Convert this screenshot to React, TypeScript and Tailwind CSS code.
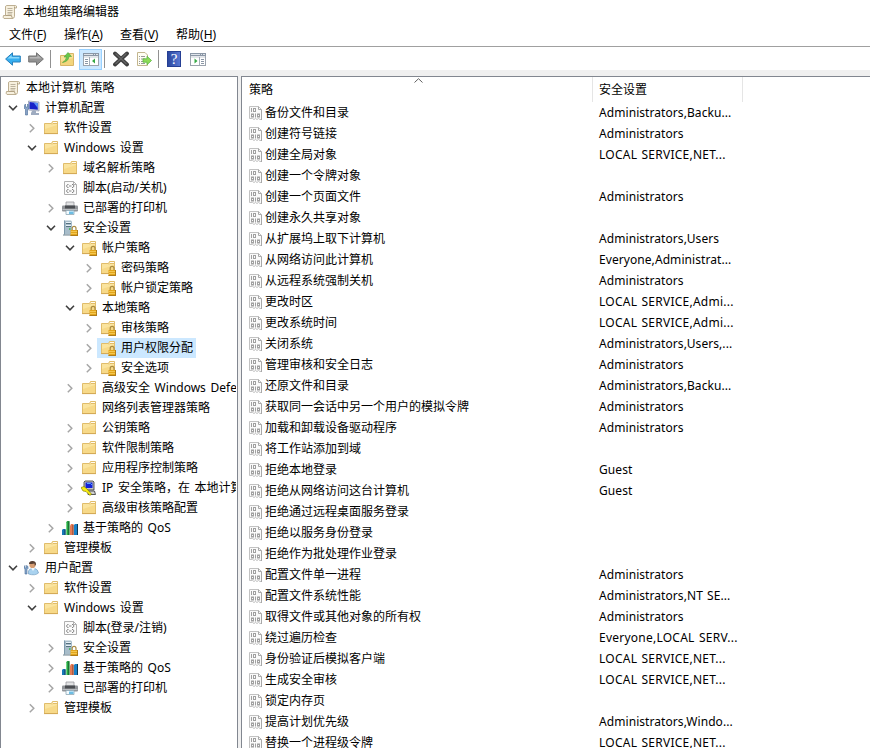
import type { ReactNode } from 'react';
import clsx from 'clsx';

type IconName =
  | 'scroll'
  | 'computer'
  | 'folder'
  | 'lockedFolder'
  | 'script'
  | 'printer'
  | 'security'
  | 'ipsec'
  | 'chart'
  | 'user';

interface TreeNode {
  label: string;
  level: number;
  icon: IconName;
  state?: 'open' | 'closed';
  selected?: boolean;
}

const tree: TreeNode[] = [
  { label: '本地计算机 策略', level: 0, icon: 'scroll' },
  { label: '计算机配置', level: 1, icon: 'computer', state: 'open' },
  { label: '软件设置', level: 2, icon: 'folder', state: 'closed' },
  { label: 'Windows 设置', level: 2, icon: 'folder', state: 'open' },
  { label: '域名解析策略', level: 3, icon: 'folder', state: 'closed' },
  { label: '脚本(启动/关机)', level: 3, icon: 'script' },
  { label: '已部署的打印机', level: 3, icon: 'printer', state: 'closed' },
  { label: '安全设置', level: 3, icon: 'security', state: 'open' },
  { label: '帐户策略', level: 4, icon: 'lockedFolder', state: 'open' },
  { label: '密码策略', level: 5, icon: 'lockedFolder', state: 'closed' },
  { label: '帐户锁定策略', level: 5, icon: 'lockedFolder', state: 'closed' },
  { label: '本地策略', level: 4, icon: 'lockedFolder', state: 'open' },
  { label: '审核策略', level: 5, icon: 'lockedFolder', state: 'closed' },
  { label: '用户权限分配', level: 5, icon: 'lockedFolder', state: 'closed', selected: true },
  { label: '安全选项', level: 5, icon: 'lockedFolder', state: 'closed' },
  { label: '高级安全 Windows Defe', level: 4, icon: 'folder', state: 'closed' },
  { label: '网络列表管理器策略', level: 4, icon: 'folder' },
  { label: '公钥策略', level: 4, icon: 'folder', state: 'closed' },
  { label: '软件限制策略', level: 4, icon: 'folder', state: 'closed' },
  { label: '应用程序控制策略', level: 4, icon: 'folder', state: 'closed' },
  { label: 'IP 安全策略，在 本地计算', level: 4, icon: 'ipsec', state: 'closed' },
  { label: '高级审核策略配置', level: 4, icon: 'folder', state: 'closed' },
  { label: '基于策略的 QoS', level: 3, icon: 'chart', state: 'closed' },
  { label: '管理模板', level: 2, icon: 'folder', state: 'closed' },
  { label: '用户配置', level: 1, icon: 'user', state: 'open' },
  { label: '软件设置', level: 2, icon: 'folder', state: 'closed' },
  { label: 'Windows 设置', level: 2, icon: 'folder', state: 'open' },
  { label: '脚本(登录/注销)', level: 3, icon: 'script' },
  { label: '安全设置', level: 3, icon: 'security', state: 'closed' },
  { label: '基于策略的 QoS', level: 3, icon: 'chart', state: 'closed' },
  { label: '已部署的打印机', level: 3, icon: 'printer', state: 'closed' },
  { label: '管理模板', level: 2, icon: 'folder', state: 'closed' },
];

const policies: [string, string][] = [
  ['备份文件和目录', 'Administrators,Backu...'],
  ['创建符号链接', 'Administrators'],
  ['创建全局对象', 'LOCAL SERVICE,NET...'],
  ['创建一个令牌对象', ''],
  ['创建一个页面文件', 'Administrators'],
  ['创建永久共享对象', ''],
  ['从扩展坞上取下计算机', 'Administrators,Users'],
  ['从网络访问此计算机', 'Everyone,Administrat...'],
  ['从远程系统强制关机', 'Administrators'],
  ['更改时区', 'LOCAL SERVICE,Admi...'],
  ['更改系统时间', 'LOCAL SERVICE,Admi...'],
  ['关闭系统', 'Administrators,Users,...'],
  ['管理审核和安全日志', 'Administrators'],
  ['还原文件和目录', 'Administrators,Backu...'],
  ['获取同一会话中另一个用户的模拟令牌', 'Administrators'],
  ['加载和卸载设备驱动程序', 'Administrators'],
  ['将工作站添加到域', ''],
  ['拒绝本地登录', 'Guest'],
  ['拒绝从网络访问这台计算机', 'Guest'],
  ['拒绝通过远程桌面服务登录', ''],
  ['拒绝以服务身份登录', ''],
  ['拒绝作为批处理作业登录', ''],
  ['配置文件单一进程', 'Administrators'],
  ['配置文件系统性能', 'Administrators,NT SE...'],
  ['取得文件或其他对象的所有权', 'Administrators'],
  ['绕过遍历检查', 'Everyone,LOCAL SERV...'],
  ['身份验证后模拟客户端', 'LOCAL SERVICE,NET...'],
  ['生成安全审核', 'LOCAL SERVICE,NET...'],
  ['锁定内存页', ''],
  ['提高计划优先级', 'Administrators,Windo...'],
  ['替换一个进程级令牌', 'LOCAL SERVICE,NET...'],
];

const menus: [string, string][] = [
  ['文件', 'F'],
  ['操作', 'A'],
  ['查看', 'V'],
  ['帮助', 'H'],
];

// Left padding of a tree row for each level
const indents = ['pl-0', 'pl-[5px]', 'pl-[24px]', 'pl-[43px]', 'pl-[62px]', 'pl-[81px]'];

function Svg({ children, className }: { children: ReactNode; className?: string }) {
  return (
    <svg width="16" height="16" viewBox="0 0 16 16" className={clsx('shrink-0', className)}>
      {children}
    </svg>
  );
}

function Folder() {
  return (
    <>
      <path d="M1.5 3.5H8.5L9.5 1.5H14.5V13.5H1.5Z" fill="#fae49f" stroke="#e0bd6c" />
      <path d="M10 2.5H14" stroke="#fffaf0" />
      <path d="M9 4.5L10 3.5H14" fill="none" stroke="#dcb35c" strokeWidth=".8" />
      <path d="M2 9L14 5V13H2Z" fill="#f7d988" />
      <path d="M1 13.6H15" stroke="#d3a855" />
    </>
  );
}

function Lock() {
  return (
    <>
      <path d="M10.2 10V8.2a1.9 1.9 0 0 1 3.8 0V10" fill="none" stroke="#a98a42" strokeWidth="1.2" />
      <rect x="8.5" y="10" width="7.5" height="6" fill="#e3a51c" />
      <path d="M9 11.5h6M9 13.5h6" stroke="#f7cf5d" strokeWidth=".8" />
      <path d="M8.5 15.5h7.5M15.5 10v6" stroke="#b07d18" />
    </>
  );
}

function Scroll() {
  return (
    <Svg>
      <path d="M4.5 1.5H13.5Q15 1.5 14.5 4H12.5V12.5Q12 14.5 10.5 14.5H2Q.5 13.5 1.5 11.5H3.5V3Q3.5 1.8 4.5 1.5Z" fill="#f7f0de" stroke="#b5a687" strokeWidth=".9" />
      <path d="M12.5 4V2.5M3.5 11.5H9.5Q9.5 14 11 14.4" fill="none" stroke="#a89878" strokeWidth=".9" />
      <path d="M5.5 4.5H10.5M5.5 6.5H10.5M5.5 8.5H10.5M5.5 10H10" stroke="#b5ab96" strokeWidth=".9" />
    </Svg>
  );
}

function NodeIcon({ name }: { name: IconName }) {
  switch (name) {
    case 'scroll':
      return <Scroll />;
    case 'folder':
      return (
        <Svg>
          <Folder />
        </Svg>
      );
    case 'lockedFolder':
      return (
        <Svg>
          <Folder />
          <Lock />
        </Svg>
      );
    case 'script':
      return (
        <Svg>
          <path d="M2.5 1.5H11.5L14.5 4.5V14.5H2.5Z" fill="#fbfbfb" stroke="#b0b0b0" />
          <path d="M11.5 1.5V4.5H14.5" fill="none" stroke="#b0b0b0" />
          <path d="M6.5 4.5H5.5L4.5 6L5.5 7.5H6.5M10 4.5H11L12 6L11 7.5H10M6.5 9.5H5.5L4.5 11L5.5 12.5H6.5M10 9.5H11L12 11L11 12.5H10" fill="none" stroke="#777" strokeWidth=".9" />
          <path d="M7 6H9.5M7 11H9.5" stroke="#888" />
        </Svg>
      );
    case 'printer':
      return (
        <Svg>
          <path d="M4 2H12V7H4Z" fill="#e2e3e4" stroke="#999b9e" strokeWidth=".8" />
          <rect x="0" y="5.5" width="16" height="6" rx="1" fill="#929599" />
          <path d="M3 5.5H13V8.5H3Z" fill="#4b4e52" />
          <path d="M.5 9.5H15.5" stroke="#b9bcc0" />
          <path d="M4 10.5H12V14.5H4Z" fill="#f4fbff" stroke="#8da7b5" strokeWidth=".8" />
          <path d="M7 11.5H11.5V14H7Z" fill="#6dbde3" />
        </Svg>
      );
    case 'security':
      return (
        <Svg>
          <path d="M2 .5H9L10 1.5V14.5H2Z" fill="#a8bdca" />
          <path d="M2.5 .5V14.5" stroke="#7d98aa" />
          <path d="M4 2.5H9M4 5.5H9" stroke="#e6f0f5" />
          <path d="M4 3.5H9M4 6.5H9" stroke="#55707f" />
          <path d="M7 9h1.5" stroke="#36b94a" strokeWidth="1.5" />
          <path d="M1 15H10" stroke="#6f838f" />
          <Lock />
        </Svg>
      );
    case 'ipsec':
      return (
        <Svg>
          <path d="M4 1H12L13 2V10H4L3 9V2Z" fill="#c3c3c3" stroke="#333" strokeWidth=".8" />
          <rect x="4.5" y="2.5" width="7" height="5.5" fill="#1322d8" />
          <path d="M6 3.5H9.5L11 5" fill="none" stroke="#59a5ff" />
          <path d="M7 11H13.5L14.5 14.5H7Z" fill="#d0d0d0" stroke="#333" strokeWidth=".8" />
          <path d="M0 7.5L3 6.5L6 9L10.5 14L9 15.5L5 11.5L2 11Z" fill="#f8ed0f" stroke="#777000" strokeWidth=".6" />
        </Svg>
      );
    case 'chart':
      return (
        <Svg>
          <path d="M0 10L1 9H3.5V15H0Z" fill="#1678b8" />
          <path d="M4 3L5 1H7.5V15H4Z" fill="#27a746" />
          <path d="M4.5 3V15" stroke="#71d783" />
          <path d="M6.8 1.5V15" stroke="#195d2c" />
          <path d="M8 6L9 4H11.5V15H8Z" fill="#e47b55" />
          <path d="M11 5V15" stroke="#843c2b" />
          <path d="M12 5L13 4H16V15H12Z" fill="#1781c8" />
          <path d="M15.5 4V15M3 9.5V15" stroke="#0b3958" />
        </Svg>
      );
    case 'computer':
      return (
        <Svg>
          <path d="M4.5 1L15 2V11L4.5 10Z" fill="#d6dbe5" stroke="#8993ab" strokeWidth=".7" />
          <path d="M5.5 2L13.8 3V9.8L5.5 9Z" fill="#1721c8" />
          <path d="M9.5 2.5L13.8 3V8Z" fill="#5791f5" />
          <path d="M8 11H12V13H15V15H7V13Z" fill="#9eabc0" />
          <path d="M0 5.5L1.5 4V7H3.5V4L5 5.5V8L3.5 9.5V15H1.5V9.5L0 8Z" fill="#89a3c5" stroke="#486b99" strokeWidth=".6" />
        </Svg>
      );
    case 'user':
      return (
        <Svg>
          <path d="M4.5 14V11Q5 9 8 8.5H11Q14 9.5 14.5 13Q11 16 4.5 14Z" fill="#a9d2ef" stroke="#6392b8" strokeWidth=".6" />
          <path d="M7 8L9 11L11 8Z" fill="#f3f9fd" />
          <circle cx="8.5" cy="5" r="3.1" fill="#d79d72" />
          <path d="M5 4Q4.8 1.3 8.2 1Q12.2 .8 12 4.5L10.8 6L10.5 3.5Q8 4 5 4Z" fill="#594033" />
          <path d="M0 6.5L1 5.5V8H2.5V5.5L4 6.5V8.5L3 9.5V14H1V9.5L0 8.5Z" fill="#8aa9cc" stroke="#476b98" strokeWidth=".6" />
        </Svg>
      );
  }
}

function Chevron({ state }: { state?: 'open' | 'closed' }) {
  return (
    <svg width="14" height="14" viewBox="0 0 14 14" className="shrink-0" fill="none">
      {state === 'open' && <path d="M3 4.8L7 8.8L11 4.8" stroke="#404040" strokeWidth="1.6" />}
      {state === 'closed' && <path d="M4.8 3.2L8.8 7.2L4.8 11.2" stroke="#a6a6a6" strokeWidth="1.5" />}
    </svg>
  );
}

function PolicyIcon() {
  return (
    <svg width="14" height="16" viewBox="0 0 14 16" className="shrink-0" fill="none">
      <path d="M.5 1.5H9.5L12.5 4.5V14.5H11L9.5 13.5L8 14.5L6.5 13.5L5 14.5L3.5 13.5L.5 13.5Z" fill="#fafafa" stroke="#c2c2c2" />
      <path d="M9.5 1.5V4.5H12.5M12.5 5V15" stroke="#a8a8a8" />
      <path d="M2.5 3V7" stroke="#a0a0a0" />
      <rect x="4.5" y="3.5" width="2" height="3" stroke="#a0a0a0" />
      <rect x="2.5" y="9" width="2" height="3" stroke="#a0a0a0" />
      <path d="M6.5 8.5V12.5" stroke="#a0a0a0" />
      <rect x="8.5" y="9" width="2" height="3" stroke="#a0a0a0" />
    </svg>
  );
}

function Arrow({ back }: { back?: boolean }) {
  return (
    <Svg className={back ? '' : '-scale-x-100'}>
      <path
        d="M.6 8L7.5 1.8V5H15.3V11H7.5V14.2Z"
        fill={back ? '#36aef0' : '#929292'}
        stroke={back ? '#2a80bb' : '#757575'}
        strokeLinejoin="round"
      />
      <path d="M2.5 7.6L6.6 3.9V6H14.3V7.6Z" fill={back ? '#8bd8fa' : '#b7b7b7'} />
    </Svg>
  );
}

function WindowPane({ flip }: { flip?: boolean }) {
  return (
    <Svg>
      <rect x=".5" y="2.5" width="15" height="12" fill="#fff" stroke="#9ba3ad" />
      <path d="M0 2H16V5H0Z" fill="#8b97a6" />
      <path d="M1 3.5H10M11 3.5H12M13 3.5H15" stroke="#dfe4ea" />
      <path d="M1 6H15" stroke="#c7cdd5" />
      <path d={flip ? 'M9.5 6V14' : 'M6.5 6V14'} stroke="#a5adb7" />
      <path d={flip ? 'M11 8.5H14M11 10.5H14M11 12.5H14' : 'M2 8.5H5M2 10.5H5M2 12.5H5'} stroke="#8b97a6" />
      <path d={flip ? 'M4.5 7.5L7.5 10L4.5 12.5Z' : 'M12 7.5L9 10L12 12.5Z'} fill="#35a944" />
    </Svg>
  );
}

function Separator({ className }: { className?: string }) {
  return <div className={clsx('h-[18px] w-px bg-[#919191]', className)} />;
}

function Toolbar() {
  return (
    <div className="flex h-6 shrink-0 items-center border-t border-[#a0a0a0] bg-white pl-[5px] pt-px">
      <Arrow back />
      <div className="w-[7px]" />
      <Arrow />
      <Separator className="ml-[6px] mr-[8px]" />
      <Svg>
        <path d="M1.5 4.5H8L9.5 2.5H14.5V14.5H1.5Z" fill="#f9e29a" stroke="#d8b566" />
        <path d="M2 10L14 7V14H2Z" fill="#f3d57c" />
        <path d="M3.5 11.5Q7 10 7.5 6H5L9 1.5L12.5 5.5H10Q9.5 10.5 3.5 11.5Z" fill="#68c74a" stroke="#4ba33a" strokeWidth=".6" />
      </Svg>
      <div className="ml-[4px] flex h-[21px] w-[23px] items-center justify-center border border-[#99d1ff] bg-[#cce8ff]">
        <WindowPane />
      </div>
      <Separator className="ml-[2px] mr-[8px]" />
      <Svg>
        <path d="M2 2.5L14 13.5M14 2.5L2 13.5" stroke="#3f3f3f" strokeWidth="3.8" strokeLinecap="round" />
        <path d="M2.5 2.5L13.5 13M13.5 2.5L2.5 13" stroke="#666" strokeWidth="1.2" />
      </Svg>
      <Svg className="ml-[7px]">
        <path d="M1.5 1.5H9L11.5 4V14.5H1.5Z" fill="#fffef4" stroke="#c3b68f" />
        <path d="M3 5.5H4M5 5.5H9M3 8H4M5 8H9M3 10.5H4M5 10.5H8M3 12.5H4M5 12.5H9" stroke="#999" />
        <path d="M7 7.8H11V5.2L15.5 9.5L11 13.8V11.2H7Z" fill="#8ddb58" stroke="#5cb544" strokeWidth=".8" />
      </Svg>
      <Separator className="ml-[6px] mr-[8px]" />
      <div className="flex h-4 w-[14px] items-center justify-center border border-[#253f94] bg-gradient-to-r from-[#2b479f] to-[#5877d2] font-['Liberation_Serif',serif] text-[15px] leading-none text-white">
        ?
      </div>
      <div className="w-[9px]" />
      <WindowPane flip />
    </div>
  );
}

function TreeRow({ node }: { node: TreeNode }) {
  return (
    <div className={clsx('flex h-5 items-center', indents[node.level])}>
      {node.level > 0 && <Chevron state={node.state} />}
      <div className={clsx('ml-px flex h-5 items-center whitespace-pre pl-[3px] pr-[3px]', node.selected && 'bg-[#cce8ff]')}>
        <NodeIcon name={node.icon} />
        <span className="pl-[5px] [word-spacing:1.5px]">{node.label}</span>
      </div>
    </div>
  );
}

export default function App() {
  return (
    <div className="flex h-[748px] w-[870px] flex-col overflow-hidden bg-white font-['Noto_Sans','Noto_Sans_CJK_SC',sans-serif] text-[12px] leading-[20px] text-black">
      <div className="flex h-6 shrink-0 items-center pl-[2px]">
        <Scroll />
        <span className="pl-[5px]">本地组策略编辑器</span>
      </div>
      <div className="flex h-[22px] shrink-0 items-center gap-4 pl-[9px]">
        {menus.map(([label, key]) => (
          <span key={key} className="w-10 whitespace-nowrap first:w-[39px]">
            {label}(<span className="underline underline-offset-2">{key}</span>)
          </span>
        ))}
      </div>
      <Toolbar />
      <div className="flex min-h-0 flex-1 gap-[3px] bg-[#f0f0f0] pt-[6px]">
        <div className="w-[238px] shrink-0 border-x border-t border-[#828790] bg-white pr-px pt-px">
          <div className="overflow-hidden">
            {tree.map((node, i) => (
              <TreeRow key={i} node={node} />
            ))}
          </div>
        </div>
        <div className="relative min-w-0 flex-1 overflow-hidden border-l border-t border-[#828790] bg-white">
          <svg width="9" height="5" viewBox="0 0 9 5" className="absolute left-[172px] top-[1px]" fill="none">
            <path d="M.5 4.5L4.5 .7L8.5 4.5" stroke="#606060" />
          </svg>
          <div className="flex h-[25px] items-center">
            <div className="h-full w-[351px] border-r border-[#e5e5e5] pl-[7px] pt-[3px]">策略</div>
            <div className="h-full w-[150px] border-r border-[#e5e5e5] pl-[6px] pt-[3px]">安全设置</div>
          </div>
          {policies.map(([name, setting]) => (
            <div key={name} className="flex h-[21px] items-center whitespace-nowrap">
              <div className="flex w-[351px] items-center pl-[7px]">
                <PolicyIcon />
                <span className="pl-[2px]">{name}</span>
              </div>
              <span
                className={clsx(
                  'pl-[6px] [word-spacing:1px]',
                  setting.includes('LOCAL') ? 'tracking-[0.24px]' : 'tracking-[0.07px]'
                )}
              >
                {setting}
              </span>
            </div>
          ))}
        </div>
      </div>
    </div>
  );
}
